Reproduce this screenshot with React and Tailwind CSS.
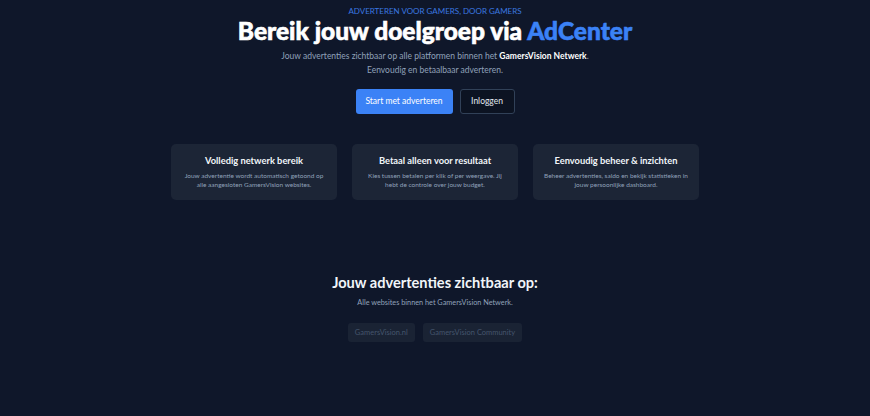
import React from "react";

const features = [
  {
    title: "Volledig netwerk bereik",
    text: "Jouw advertentie wordt automatisch getoond op alle aangesloten GamersVision websites.",
  },
  {
    title: "Betaal alleen voor resultaat",
    text: "Kies tussen betalen per klik of per weergave. Jij hebt de controle over jouw budget.",
  },
  {
    title: "Eenvoudig beheer & inzichten",
    text: "Beheer advertenties, saldo en bekijk statistieken in jouw persoonlijke dashboard.",
  },
];

const sites = ["GamersVision.nl", "GamersVision Community"];

export default function App() {
  return (
    <div
      className="min-h-screen w-full bg-[#0f172a] text-white flex flex-col items-center text-center pt-[5px]"
      style={{ fontFamily: 'Lato, "Noto Sans", sans-serif' }}
    >
      {/* hero */}
      <div className="text-[8px] leading-[12px] uppercase text-[#3b78e0]">
        Adverteren voor gamers, door gamers
      </div>
      <h1 className="text-[24.5px] leading-[28px] font-black [-webkit-text-stroke:0.6px]">
        Bereik jouw doelgroep via <span className="text-[#3b82f6]">AdCenter</span>
      </h1>
      <p className="mt-[4px] text-[8.5px] leading-[14px] text-slate-400">
        Jouw advertenties zichtbaar op alle platformen binnen het{" "}
        <span className="font-bold text-white">GamersVision Netwerk</span>.
        <br />
        Eenvoudig en betaalbaar adverteren.
      </p>
      <div className="mt-[12px] flex gap-[7px]">
        <button className="h-[25px] w-[97px] rounded-[3px] bg-[#3b82f6] text-[8.5px] text-white">
          Start met adverteren
        </button>
        <button className="h-[25px] w-[55px] rounded-[3px] border border-slate-700 bg-[#0c1322] text-[8.5px] text-slate-200">
          Inloggen
        </button>
      </div>

      {/* features */}
      <div className="mt-[30px] grid w-[528px] grid-cols-3 gap-[15px]">
        {features.map((f) => (
          <div key={f.title} className="h-[56px] rounded-[5px] bg-[#1c2536] px-[10px] pt-[10px]">
            <div className="text-[9.3px] leading-[14px] font-bold text-slate-100">{f.title}</div>
            <div className="mt-[3px] text-[6.5px] leading-[9px] text-slate-400">{f.text}</div>
          </div>
        ))}
      </div>

      {/* netwerk */}
      <h2 className="mt-[73px] text-[14.6px] leading-[20px] font-bold text-slate-100">
        Jouw advertenties zichtbaar op:
      </h2>
      <p className="mt-[4px] text-[7.3px] leading-[12px] text-slate-400">
        Alle websites binnen het GamersVision Netwerk.
      </p>
      <div className="mt-[14px] flex gap-[8px]">
        {sites.map((s) => (
          <span
            key={s}
            className="h-[19px] rounded-[3px] bg-[#1a2334] px-[7px] text-[7.5px] leading-[19px] text-slate-600"
          >
            {s}
          </span>
        ))}
      </div>
    </div>
  );
}
